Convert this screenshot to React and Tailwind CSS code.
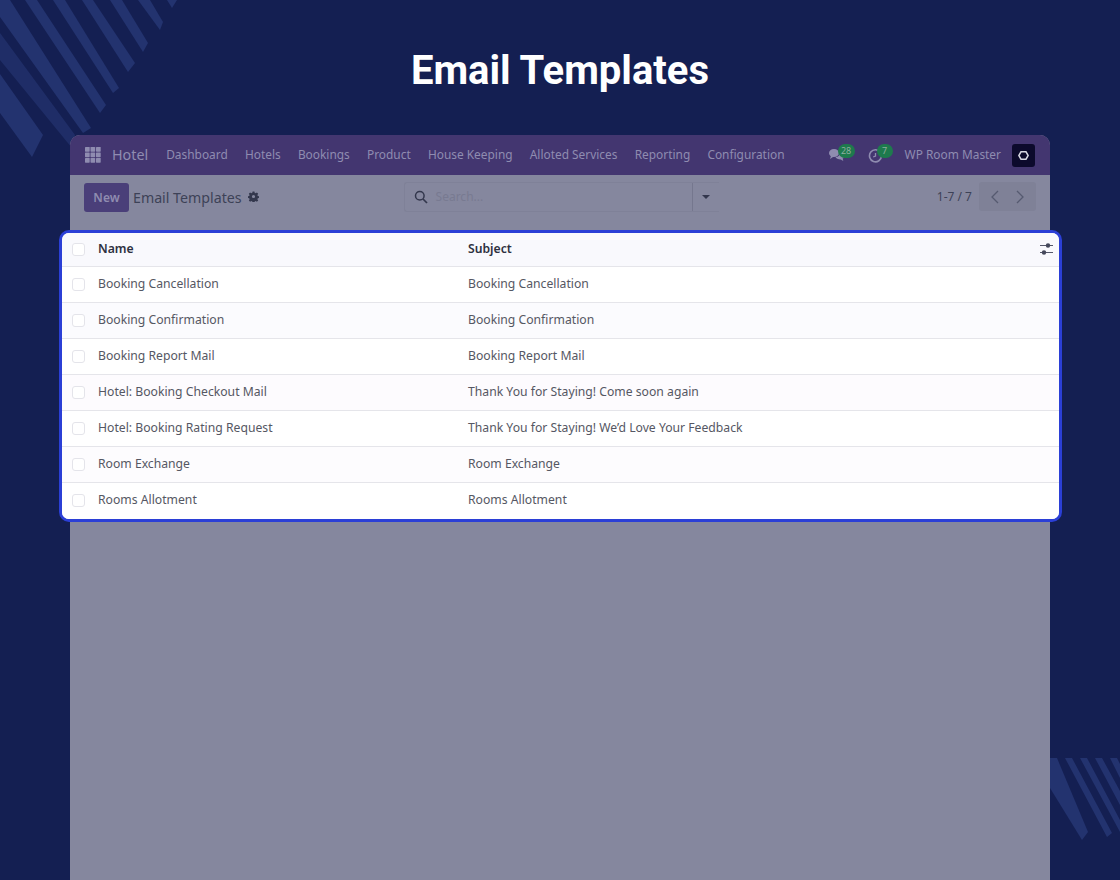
import React from "react";

const navItems = ["Dashboard", "Hotels", "Bookings", "Product", "House Keeping", "Alloted Services", "Reporting", "Configuration"];
const rows = [
  ["Booking Cancellation", "Booking Cancellation", "bg-white"],
  ["Booking Confirmation", "Booking Confirmation", "bg-[#fbfbfe]"],
  ["Booking Report Mail", "Booking Report Mail", "bg-white"],
  ["Hotel: Booking Checkout Mail", "Thank You for Staying! Come soon again", "bg-[#fdfbfe]"],
  ["Hotel: Booking Rating Request", "Thank You for Staying! We’d Love Your Feedback", "bg-white"],
  ["Room Exchange", "Room Exchange", "bg-[#fdfcfe]"],
  ["Rooms Allotment", "Rooms Allotment", "bg-white"],
];

function Check() {
  return <span className="block w-[13px] h-[13px] rounded-[3px] border border-[#e4e4ea] bg-white shrink-0" />;
}

function TopLeftStripes() {
  return (
    <svg className="absolute left-0 top-0" width="190" height="165" viewBox="0 0 190 165" aria-hidden="true">
      <g fill="#23336f">
        <polygon points="0,74 43,135 32,157 0,113" />
        <polygon points="0,33 75,135 72,148 0,60" opacity="0.75" />
        <polygon points="0,0 10,0 91,128 83,133 0,17" />
        <polygon points="25,0 37,0 106,105 100,113" />
        <polygon points="53,0 65,0 119,88 113,93" />
        <polygon points="82,0 93,0 135,63 128,72" />
        <polygon points="110,0 122,0 148,43 143,52" />
        <polygon points="138,0 150,0 163,22 160,30" />
        <polygon points="167,0 177,0 172,8" />
      </g>
    </svg>
  );
}

function BottomRightStripes() {
  return (
    <svg className="absolute right-0 top-[758px]" width="70" height="90" viewBox="0 0 70 90" aria-hidden="true">
      <g fill="#23336f">
        <polygon points="0,0 7,0 38,74 32,82 0,30" />
        <polygon points="15,0 22,0 62,75 57,79" />
        <polygon points="30,0 37,0 70,62 70,74" />
        <polygon points="45,0 52,0 70,33 70,47" />
        <polygon points="60,0 67,0 70,6 70,20" />
      </g>
    </svg>
  );
}

function GridIcon() {
  return (
    <svg width="16" height="16" viewBox="0 0 16 16" className="shrink-0" aria-hidden="true">
      <g fill="#8f8cb0">
        {[0, 5.5, 11].flatMap((x) =>
          [0, 5.5, 11].map((y) => <rect key={`${x}-${y}`} x={x} y={y} width="4.7" height="4.7" rx="0.6" />)
        )}
      </g>
    </svg>
  );
}

export default function App() {
  return (
    <div
      className="relative w-[1120px] h-[880px] overflow-hidden bg-[#141f52]"
      style={{ fontFamily: '"Noto Sans", sans-serif' }}
    >
      <TopLeftStripes />
      <BottomRightStripes />
      <div className="relative flex flex-col items-center">
        <h1
          className="h-[135px] pt-[44px] text-[40px] leading-[54px] font-bold text-white"
          style={{ fontFamily: 'Roboto, sans-serif' }}
        >
          Email Templates
        </h1>

        <div className="w-[980px] h-[745px] rounded-t-[10px] bg-[#85879e] flex flex-col">
          <nav className="h-10 shrink-0 rounded-t-[10px] bg-[#433670] flex items-center pl-[15px] pr-[15px] text-[11.9px] text-[#8f8cb0]">
            <GridIcon />
            <span className="ml-[11px] mr-[18px] text-[14.3px]">Hotel</span>
            <div className="flex gap-[17.2px]">
              {navItems.map((n) => (
                <span key={n}>{n}</span>
              ))}
            </div>
            <div className="ml-auto flex items-center">
              <span className="relative w-[17px] h-[16px] mr-[23px]">
                <svg width="17" height="15" viewBox="0 0 17 15" className="absolute left-0 top-[1px]" aria-hidden="true">
                  <path d="M6 1C3 1 1 2.700 1 5c0 1.300.7 2.400 1.800 3.200L2 11l3-2h1c3 0 5-1.700 5-4s-2-4-5-4z" fill="#8f8cb0" />
                  <path d="M12 5c2.500 0 4 1.300 4 3.200 0 1-.5 1.800-1.300 2.400l.6 2.400-2.600-1.600c-2.500 0-4.700-.8-5.200-2.400 3 0 4.500-1.800 4.500-4z" fill="#8f8cb0" />
                </svg>
                <span className="absolute left-[10px] -top-[3px] h-[14px] w-[17px] rounded-full bg-[#1e7a4d] text-center text-[9px] leading-[14px] text-[#8cae9f]">
                  28
                </span>
              </span>
              <span className="relative w-[15px] h-[16px] mr-[22px]">
                <svg width="15" height="15" viewBox="0 0 15 15" className="absolute left-0 top-[1px]" aria-hidden="true">
                  <path d="M12.500 4.500A6 6 0 1 0 13.500 8" fill="none" stroke="#8f8cb0" strokeWidth="1.600" />
                  <path d="M7.500 5v3l-2.300 1" fill="none" stroke="#8f8cb0" strokeWidth="1.300" />
                </svg>
                <span className="absolute left-[9px] -top-[3px] h-[14px] w-[16px] rounded-full bg-[#1e7a4d] text-center text-[9px] leading-[14px] text-[#8cae9f]">
                  7
                </span>
              </span>
              <span>WP Room Master</span>
              <span className="ml-[11px] w-[23px] h-[23px] rounded-[3px] bg-[#0c0a2c] flex items-center justify-center">
                <svg width="11" height="9" viewBox="0 0 11 9" aria-hidden="true">
                  <path d="M3 .8h5L10.200 4.500 8 8.200H3L.8 4.500z" fill="none" stroke="#d9d9e4" strokeWidth="1.500" />
                </svg>
              </span>
            </div>
          </nav>

          <div className="h-[55px] shrink-0 flex items-start pl-[14px] pr-[14px] pt-[8px]">
            <span className="w-[45px] h-[29px] rounded-[3px] bg-[#4a3f79] text-[#8f8cb0] text-[12px] font-semibold flex items-center justify-center">
              New
            </span>
            <span className="ml-[4px] mt-[5px] text-[14.2px] leading-[20px] text-[#3d4257]">Email Templates</span>
            <svg width="11" height="11" viewBox="0 0 24 24" className="ml-[6px] mt-[8px]" aria-hidden="true">
              <path
                fill="#33374d"
                d="M10 1h4l.6 3 2.200.9 2.600-1.700 2.800 2.800-1.700 2.600.9 2.200 3 .6v4l-3 .6-.9 2.200 1.700 2.600-2.800 2.800-2.600-1.700-2.200.9-.6 3h-4l-.6-3-2.200-.9-2.600 1.700-2.800-2.800 1.700-2.600-.9-2.200-3-.6v-4l3-.6.9-2.200L1.800 6l2.800-2.800 2.600 1.700 2.200-.9zM12 8.500a3.500 3.500 0 1 0 0 7 3.500 3.500 0 0 0 0-7z"
              />
            </svg>
            <div className="ml-[145px] w-[315px] h-[30px] -mt-[1px] flex items-center rounded-l-[3px] border border-[#7f8198] border-r-0">
              <div className="flex-1 h-full flex items-center pl-[9px] border-r border-[#75778e]">
                <svg width="14" height="14" viewBox="0 0 14 14" aria-hidden="true">
                  <circle cx="5.800" cy="5.800" r="4.300" fill="none" stroke="#33374d" strokeWidth="1.500" />
                  <path d="M9 9l4 4" stroke="#33374d" strokeWidth="1.700" />
                </svg>
                <span className="ml-[8px] text-[12px] text-[#787a91]">Search...</span>
              </div>
              <div className="w-[26px] flex justify-center">
                <span className="w-0 h-0 border-x-[4px] border-x-transparent border-t-[4px] border-t-[#33374d]" />
              </div>
            </div>
            <span className="ml-auto mt-[4px] text-[12px] leading-[20px] text-[#3d4257]">1-7 / 7</span>
            <div className="ml-[7px] w-[57px] h-[29px] -mt-[1px] rounded-[3px] bg-[#7f8197] flex items-center justify-around px-[4px]">
              <svg width="10" height="14" viewBox="0 0 10 14" aria-hidden="true">
                <path d="M8 1L2 7l6 6" fill="none" stroke="#565a70" strokeWidth="1.300" />
              </svg>
              <svg width="10" height="14" viewBox="0 0 10 14" aria-hidden="true">
                <path d="M2 1l6 6-6 6" fill="none" stroke="#565a70" strokeWidth="1.300" />
              </svg>
            </div>
          </div>

          <div className="-mx-[11px] w-[1003px] h-[292px] shrink-0 rounded-[10px] border-[3px] border-[#2b3fd6] bg-white overflow-hidden text-[12.2px] text-[#555763]">
            <div className="h-[34px] pb-[1px] bg-[#f9f9fd] flex items-center border-b border-[#e5e5ea] font-semibold text-[#2d3040]">
              <div className="pl-[10px] w-[36px]"><Check /></div>
              <div className="w-[370px]">Name</div>
              <div className="flex-1">Subject</div>
              <svg width="13" height="12" viewBox="0 0 13 12" className="mr-[6px]" aria-hidden="true">
                <path d="M0 2.500h13M0 9.500h13" stroke="#55586a" strokeWidth="1" />
                <circle cx="8" cy="2.500" r="2.200" fill="#44475a" />
                <circle cx="4" cy="9.500" r="2.200" fill="#44475a" />
              </svg>
            </div>
            {rows.map(([a, b, bg], i) => (
              <div
                key={a}
                className={`h-[36px] pb-[1px] flex items-center ${bg} ${i < rows.length - 1 ? "border-b border-[#e5e5ea]" : ""}`}
              >
                <div className="pl-[10px] w-[36px]"><Check /></div>
                <div className="w-[370px]">{a}</div>
                <div className="flex-1">{b}</div>
              </div>
            ))}
          </div>
        </div>
      </div>
    </div>
  );
}
